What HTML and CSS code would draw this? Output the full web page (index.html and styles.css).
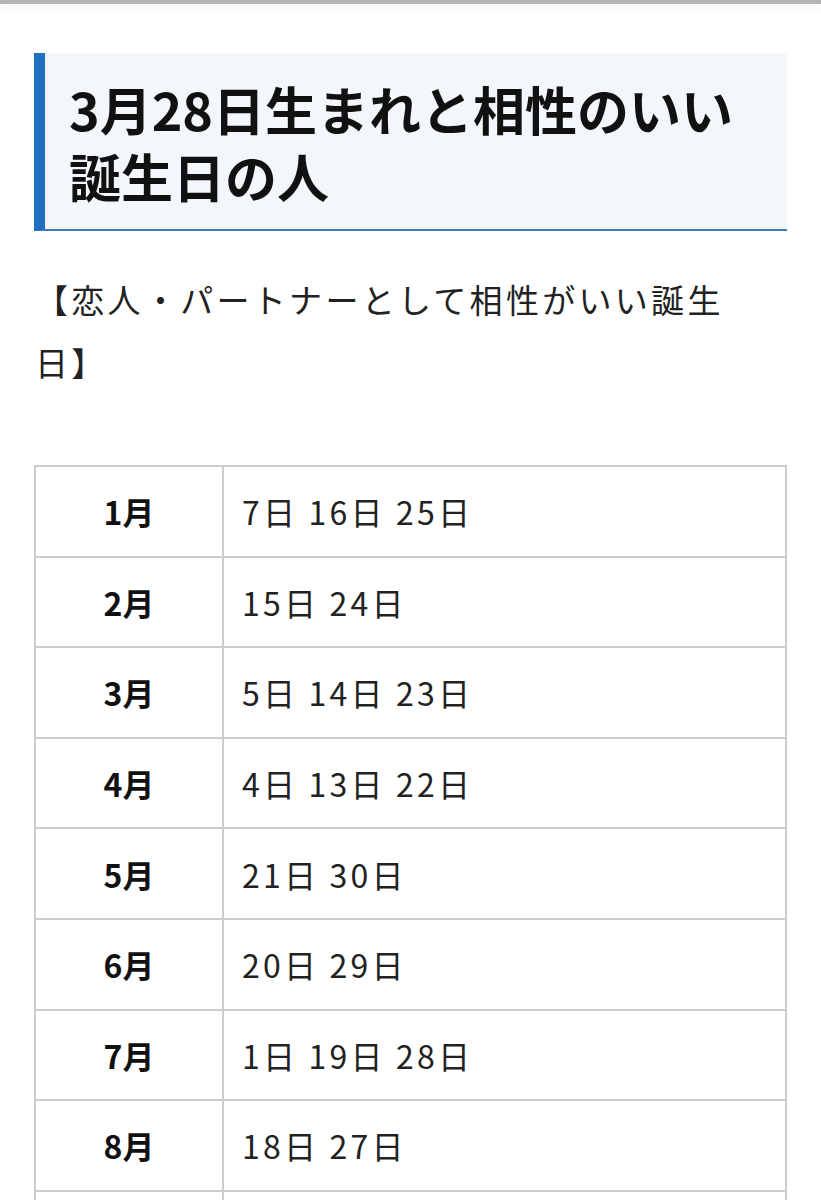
FILE: index.html
```html
<!DOCTYPE html>
<html lang="ja">
<head>
<meta charset="utf-8">
<link rel="stylesheet" href="styles.css">
</head>
<body>
<div class="topbar"></div>
<main class="content">
  <h2 class="heading">3月28日生まれと相性のいい誕生日の人</h2>
  <p class="lead">【恋人・パートナーとして相性がいい誕生日】</p>
  <table class="days">
    <tbody>
      <tr><th>1月</th><td>7日 16日 25日</td></tr>
      <tr><th>2月</th><td>15日 24日</td></tr>
      <tr><th>3月</th><td>5日 14日 23日</td></tr>
      <tr><th>4月</th><td>4日 13日 22日</td></tr>
      <tr><th>5月</th><td>21日 30日</td></tr>
      <tr><th>6月</th><td>20日 29日</td></tr>
      <tr><th>7月</th><td>1日 19日 28日</td></tr>
      <tr><th>8月</th><td>18日 27日</td></tr>
      <tr><th>9月</th><td>17日 26日</td></tr>
    </tbody>
  </table>
</main>
</body>
</html>
```

FILE: styles.css
```css
html, body {
  margin: 0;
  padding: 0;
  background: #ffffff;
}
body {
  font-family: "Noto Sans CJK JP", "Noto Sans", sans-serif;
  color: #111111;
  overflow: hidden;
  text-spacing-trim: space-all;
}
.topbar {
  height: 4px;
  background: #b4b4b4;
  box-shadow: 0 2px 10px rgba(0, 0, 0, 0.08);
}
.content {
  padding: 0 34px;
}
.heading {
  margin: 49px 0 0;
  padding: 22px 36px 20px 24px;
  background: #f3f7fc;
  border-left: 11px solid #1f70c1;
  border-bottom: 2px solid #3b7dc0;
  font-size: 52px;
  line-height: 67px;
  font-weight: 700;
  color: #111111;
}
.lead {
  margin: 37px 0 0;
  padding-left: 1px;
  font-size: 33px;
  letter-spacing: 0.1em;
  line-height: 63px;
  font-weight: 400;
  color: #222222;
  line-break: strict;
}
.days {
  margin-top: 71px;
  width: 100%;
  border-collapse: collapse;
  font-size: 32px;
}
.days th,
.days td {
  border: 2px solid #cdcdcd;
  height: 88.6px;
  padding: 0;
  line-height: 40px;
}
.days th {
  width: 186px;
  text-align: center;
  font-weight: 700;
  color: #111111;
}
.days td {
  text-align: left;
  padding-left: 18px;
  font-weight: 400;
  color: #222222;
  letter-spacing: 0.1em;
}
```
